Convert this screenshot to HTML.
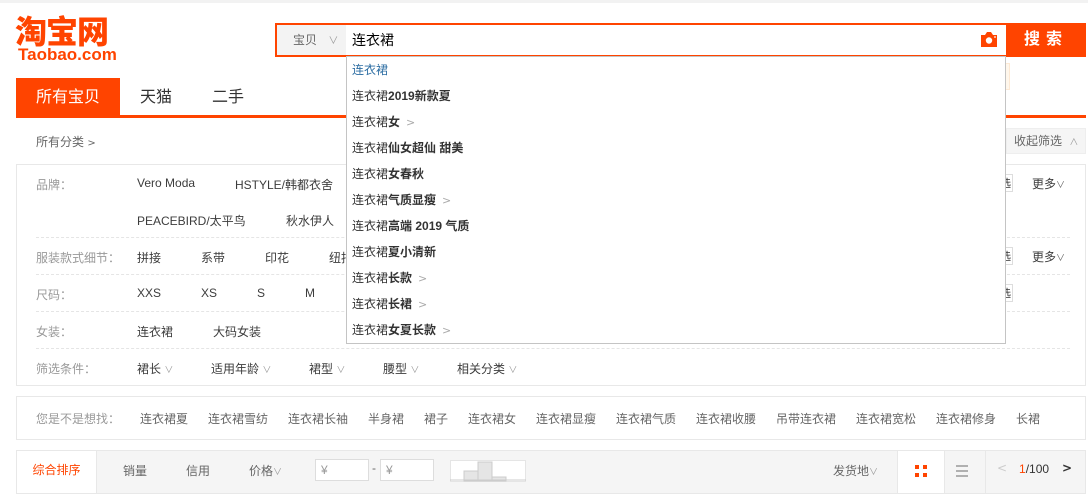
<!DOCTYPE html>
<html><head><meta charset="utf-8"><style>
*{margin:0;padding:0;box-sizing:border-box}
body{width:1088px;height:493px;overflow:hidden;background:#fff;font-family:"Liberation Sans","Noto Sans CJK SC",sans-serif;font-size:12px;color:#3c3c3c;position:relative}
.a{position:absolute;white-space:nowrap}
.lab{color:#999}
.dl{position:absolute;left:36px;width:1034px;border-top:1px dashed #e5e5e5}
.dd div{height:26px;line-height:26px;padding-left:5px;color:#333}
.dd b{font-weight:bold}
.ch{color:#aaa;margin-left:6px;font-family:"DejaVu Sans",sans-serif;font-size:11px}
.sel{border:1px solid #ddd;background:#fff;font-size:11px;padding:0 1px;color:#333}
.sg{position:absolute;top:410px;color:#666}
</style></head><body>
<div class="a" style="left:0;top:0;width:1088px;height:3px;background:#f2f2f2"></div>
<div class="a" style="left:15px;top:12px;font-size:32px;font-weight:900;color:#ff4400;line-height:36px;font-family:'Noto Sans CJK SC',sans-serif;letter-spacing:-1px">淘宝网</div>
<div class="a" style="left:18px;top:46px;font-size:17px;font-weight:bold;color:#ff4400;line-height:18px">Taobao.com</div>
<div class="a" style="left:275px;top:23px;width:732px;height:34px;border:2px solid #ff4400;border-right:none;background:#fff"></div>
<div class="a" style="left:277px;top:25px;width:69px;height:30px;background:#f3f3f3;color:#666;line-height:30px;padding-left:16px">宝贝 <span style="margin-left:8px;color:#999;font-size:10px">∨</span></div>
<div class="a" style="left:352px;top:25px;line-height:30px;font-size:14px;color:#000">连衣裙</div>
<svg class="a" style="left:980px;top:32px" width="18" height="15" viewBox="0 0 18 15"><path d="M1 3h4l2-3h4l2 3h4v12H1z" fill="#ff4400"/><circle cx="9" cy="8.5" r="3.2" fill="#fff"/><circle cx="15" cy="5" r="0.9" fill="#fff"/></svg>
<div class="a" style="left:1006px;top:23px;width:80px;height:34px;background:#ff4400;color:#fff;font-size:16px;font-weight:bold;text-align:center;line-height:34px;letter-spacing:6px">搜索</div>
<div class="a" style="left:1000px;top:63px;width:10px;height:27px;background:#fff7ec;border:1px solid #fde9d4"></div>
<div class="a" style="left:16px;top:78px;width:104px;height:39px;background:#ff4400;color:#fff;font-size:16px;text-align:center;line-height:39px">所有宝贝</div>
<div class="a" style="left:140px;top:78px;font-size:16px;line-height:39px;color:#333">天猫</div>
<div class="a" style="left:212px;top:78px;font-size:16px;line-height:39px;color:#333">二手</div>
<div class="a" style="left:16px;top:115px;width:1070px;height:3px;background:#ff4400"></div>
<div class="a" style="left:36px;top:134px;color:#666;line-height:16px">所有分类 <span style="font-family:'DejaVu Sans';font-size:10px">&gt;</span></div>
<div class="a" style="left:1006px;top:128px;width:80px;height:26px;background:#f5f5f5;border:1px solid #eee;color:#666;line-height:24px;padding-left:7px">收起筛选 <span style="font-size:9px;color:#999;margin-left:4px">∧</span></div>
<div class="a" style="left:16px;top:164px;width:1070px;height:222px;border:1px solid #e8e8e8"></div>
<div class="a lab" style="left:36px;top:176px">品牌：</div>
<div class="a" style="left:137px;top:176px">Vero Moda</div>
<div class="a" style="left:235px;top:176px">HSTYLE/韩都衣舍</div>
<div class="a" style="left:137px;top:212px">PEACEBIRD/太平鸟</div>
<div class="a" style="left:286px;top:212px">秋水伊人</div>
<div class="dl" style="top:237px"></div>
<div class="a lab" style="left:36px;top:249px">服装款式细节：</div>
<div class="a" style="left:137px;top:249px">拼接</div><div class="a" style="left:201px;top:249px">系带</div><div class="a" style="left:265px;top:249px">印花</div><div class="a" style="left:329px;top:249px">纽扣</div>
<div class="dl" style="top:274px"></div>
<div class="a lab" style="left:36px;top:286px">尺码：</div>
<div class="a" style="left:137px;top:286px">XXS</div><div class="a" style="left:201px;top:286px">XS</div><div class="a" style="left:257px;top:286px">S</div><div class="a" style="left:305px;top:286px">M</div>
<div class="dl" style="top:311px"></div>
<div class="a lab" style="left:36px;top:323px">女装：</div>
<div class="a" style="left:137px;top:323px">连衣裙</div><div class="a" style="left:213px;top:323px">大码女装</div>
<div class="dl" style="top:348px"></div>
<div class="a lab" style="left:36px;top:360px">筛选条件：</div>
<div class="a" style="left:137px;top:360px">裙长 <span style="color:#999;font-size:9px">∨</span></div>
<div class="a" style="left:211px;top:360px">适用年龄 <span style="color:#999;font-size:9px">∨</span></div>
<div class="a" style="left:309px;top:360px">裙型 <span style="color:#999;font-size:9px">∨</span></div>
<div class="a" style="left:383px;top:360px">腰型 <span style="color:#999;font-size:9px">∨</span></div>
<div class="a" style="left:457px;top:360px">相关分类 <span style="color:#999;font-size:9px">∨</span></div>
<div class="a sel" style="left:998px;top:174px">选</div><div class="a" style="left:1032px;top:175px">更多<span style="font-size:9px;color:#666">∨</span></div>
<div class="a sel" style="left:998px;top:247px">选</div><div class="a" style="left:1032px;top:248px">更多<span style="font-size:9px;color:#666">∨</span></div>
<div class="a sel" style="left:998px;top:284px">选</div>
<div class="a dd" style="left:346px;top:56px;width:660px;height:288px;background:#fff;border:1px solid #c4c4c4">
<div style="color:#2d6ea3">连衣裙</div>
<div>连衣裙<b>2019新款夏</b></div>
<div>连衣裙<b>女</b><span class="ch">&gt;</span></div>
<div>连衣裙<b>仙女超仙 甜美</b></div>
<div>连衣裙<b>女春秋</b></div>
<div>连衣裙<b>气质显瘦</b><span class="ch">&gt;</span></div>
<div>连衣裙<b>高端 2019 气质</b></div>
<div>连衣裙<b>夏小清新</b></div>
<div>连衣裙<b>长款</b><span class="ch">&gt;</span></div>
<div>连衣裙<b>长裙</b><span class="ch">&gt;</span></div>
<div>连衣裙<b>女夏长款</b><span class="ch">&gt;</span></div>
</div>
<div class="a" style="left:16px;top:396px;width:1070px;height:44px;border:1px solid #e8e8e8"></div>
<div class="a" style="left:36px;top:410px;color:#999">您是不是想找：</div>
<span class="sg" style="left:140px">连衣裙夏</span><span class="sg" style="left:208px">连衣裙雪纺</span><span class="sg" style="left:288px">连衣裙长袖</span><span class="sg" style="left:368px">半身裙</span><span class="sg" style="left:424px">裙子</span><span class="sg" style="left:468px">连衣裙女</span><span class="sg" style="left:536px">连衣裙显瘦</span><span class="sg" style="left:616px">连衣裙气质</span><span class="sg" style="left:696px">连衣裙收腰</span><span class="sg" style="left:776px">吊带连衣裙</span><span class="sg" style="left:856px">连衣裙宽松</span><span class="sg" style="left:936px">连衣裙修身</span><span class="sg" style="left:1016px">长裙</span>
<div class="a" style="left:16px;top:450px;width:1070px;height:44px;background:#f5f5f5;border:1px solid #e8e8e8"></div>
<div class="a" style="left:17px;top:451px;width:80px;height:42px;background:#fff;border-right:1px solid #e8e8e8;color:#f40;line-height:38px;text-align:center">综合排序</div>
<div class="a" style="left:123px;top:462px;color:#666">销量</div>
<div class="a" style="left:186px;top:462px;color:#666">信用</div>
<div class="a" style="left:249px;top:462px;color:#666">价格<span style="font-size:9px;color:#999">∨</span></div>
<div class="a" style="left:315px;top:459px;width:54px;height:22px;background:#fff;border:1px solid #ddd;color:#999;line-height:20px;padding-left:5px">¥</div>
<div class="a" style="left:372px;top:461px;color:#666">-</div>
<div class="a" style="left:380px;top:459px;width:54px;height:22px;background:#fff;border:1px solid #ddd;color:#999;line-height:20px;padding-left:5px">¥</div>
<svg class="a" style="left:450px;top:460px" width="76" height="22"><rect x="0.5" y="0.5" width="75" height="21" fill="#fff" stroke="#e5e5e5"/><rect x="14" y="11" width="14" height="10" fill="#e5e5e5" stroke="#ccc"/><rect x="28" y="2" width="14" height="19" fill="#e5e5e5" stroke="#ccc"/><rect x="42" y="17" width="14" height="4" fill="#e5e5e5" stroke="#ccc"/><line x1="0" y1="20" x2="76" y2="20" stroke="#ccc"/></svg>
<div class="a" style="left:833px;top:462px;color:#666">发货地<span style="font-size:9px;color:#999">∨</span></div>
<div class="a" style="left:897px;top:451px;width:48px;height:42px;background:#fff;border-left:1px solid #e8e8e8;border-right:1px solid #e8e8e8"></div>
<svg class="a" style="left:914px;top:464px" width="14" height="14"><rect x="1" y="1" width="4" height="4" fill="#f40"/><rect x="9" y="1" width="4" height="4" fill="#f40"/><rect x="1" y="9" width="4" height="4" fill="#f40"/><rect x="9" y="9" width="4" height="4" fill="#f40"/></svg>
<svg class="a" style="left:955px;top:464px" width="14" height="14"><path d="M1 2h12M1 7h12M1 12h12" stroke="#888" stroke-width="1.3"/></svg>
<div class="a" style="left:985px;top:451px;height:42px;border-left:1px solid #e8e8e8"></div>
<div class="a" style="left:997px;top:461px;color:#ccc;font-family:'DejaVu Sans';font-size:12px">&lt;</div>
<div class="a" style="left:1019px;top:462px;color:#333"><span style="color:#f40">1</span>/100</div>
<div class="a" style="left:1062px;top:461px;color:#333;font-family:'DejaVu Sans';font-size:12px;font-weight:bold">&gt;</div>
</body></html>
